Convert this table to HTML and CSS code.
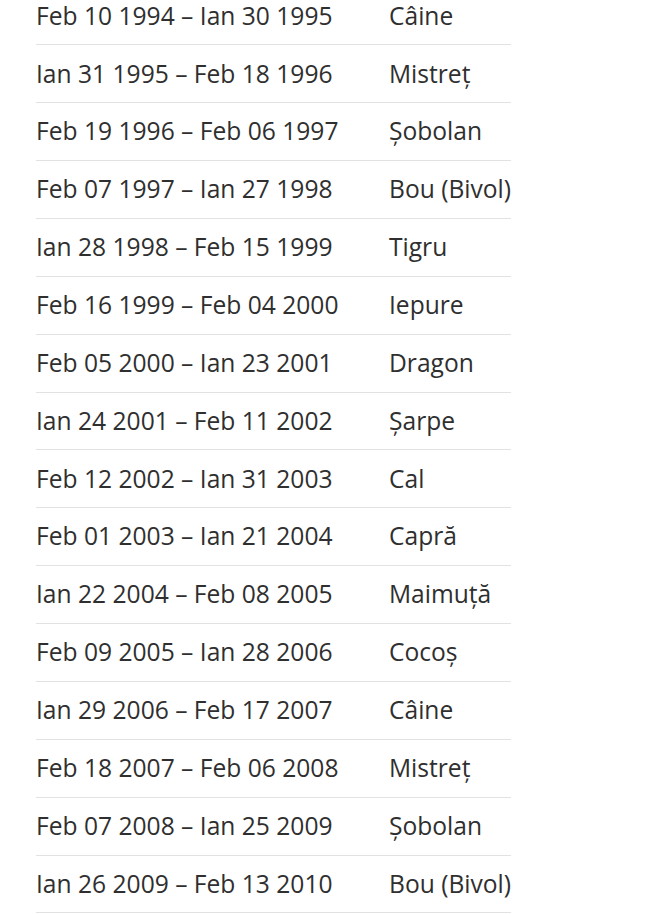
FILE: index.html
```html
<!DOCTYPE html>
<html lang="ro">
<head>
<meta charset="utf-8">
<link rel="stylesheet" href="styles.css">
</head>
<body>
<div class="zodiac">
  <div class="row"><span class="period">Feb 10 1994 – Ian 30 1995</span><span class="sign">Câine</span></div>
  <div class="row"><span class="period">Ian 31 1995 – Feb 18 1996</span><span class="sign">Mistreț</span></div>
  <div class="row"><span class="period">Feb 19 1996 – Feb 06 1997</span><span class="sign">Șobolan</span></div>
  <div class="row"><span class="period">Feb 07 1997 – Ian 27 1998</span><span class="sign">Bou (Bivol)</span></div>
  <div class="row"><span class="period">Ian 28 1998 – Feb 15 1999</span><span class="sign">Tigru</span></div>
  <div class="row"><span class="period">Feb 16 1999 – Feb 04 2000</span><span class="sign">Iepure</span></div>
  <div class="row"><span class="period">Feb 05 2000 – Ian 23 2001</span><span class="sign">Dragon</span></div>
  <div class="row"><span class="period">Ian 24 2001 – Feb 11 2002</span><span class="sign">Șarpe</span></div>
  <div class="row"><span class="period">Feb 12 2002 – Ian 31 2003</span><span class="sign">Cal</span></div>
  <div class="row"><span class="period">Feb 01 2003 – Ian 21 2004</span><span class="sign">Capră</span></div>
  <div class="row"><span class="period">Ian 22 2004 – Feb 08 2005</span><span class="sign">Maimuță</span></div>
  <div class="row"><span class="period">Feb 09 2005 – Ian 28 2006</span><span class="sign">Cocoș</span></div>
  <div class="row"><span class="period">Ian 29 2006 – Feb 17 2007</span><span class="sign">Câine</span></div>
  <div class="row"><span class="period">Feb 18 2007 – Feb 06 2008</span><span class="sign">Mistreț</span></div>
  <div class="row"><span class="period">Feb 07 2008 – Ian 25 2009</span><span class="sign">Șobolan</span></div>
  <div class="row"><span class="period">Ian 26 2009 – Feb 13 2010</span><span class="sign">Bou (Bivol)</span></div>
</div>
</body>
</html>
```
FILE: styles.css
```css
html, body {
  margin: 0;
  padding: 0;
  background: #fff;
}
body {
  font-family: "Open Sans", "Noto Sans", sans-serif;
  color: #2f2f2f;
  overflow: hidden;
}
.zodiac {
  width: 475px;
  margin: -12.4px 0 0 36px;
}
.row {
  display: grid;
  grid-template-columns: 353px 122px;
  align-items: center;
  height: 57.87px;
  box-sizing: border-box;
  border-bottom: 1px solid #e2e2e2;
  font-size: 24.6px;
  line-height: 1;
}
.period, .sign {
  white-space: nowrap;
}
```
